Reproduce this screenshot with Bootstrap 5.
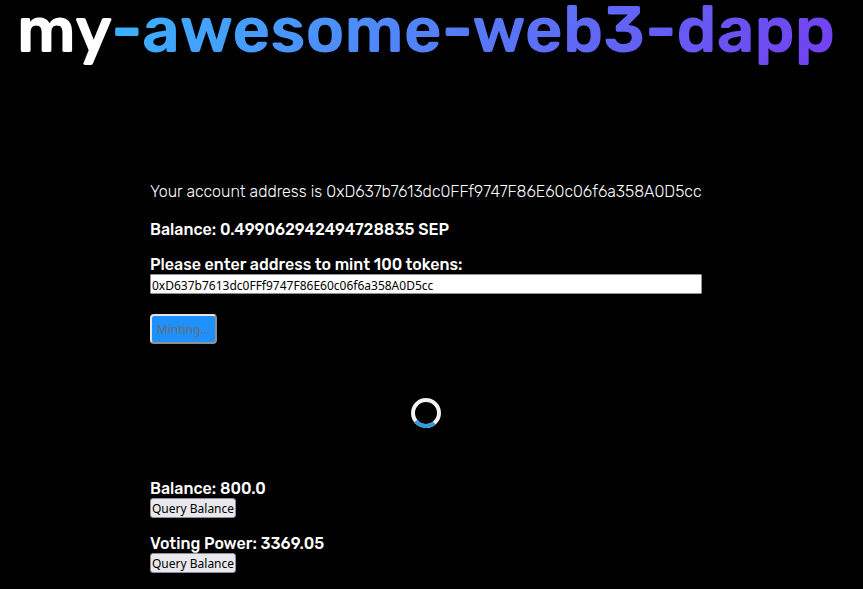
<!DOCTYPE html>
<html lang="en">
<head>
<meta charset="utf-8">
<meta name="viewport" content="width=device-width, initial-scale=1">
<title>my-awesome-web3-dapp</title>
<link href="https://cdn.jsdelivr.net/npm/bootstrap@5.3.0/dist/css/bootstrap.min.css" rel="stylesheet">
<style>
body { background: #000; color: #fff; font-family: Rubik, Inter, sans-serif; font-size: 16px; line-height: 19px; padding-right: 11px; }
.site-title { font-size: 65px; line-height: 60px; font-weight: 600; }
.title-gradient { padding-bottom: 4px; background: linear-gradient(128deg, #38b6ff, #743ef0); -webkit-background-clip: text; background-clip: text; color: transparent; }
.dapp-panel { width: 100%; max-width: 552px; margin-top: 122px; }
.account-line { font-weight: 300; margin-bottom: 19px; }
.strong-line { font-weight: 500; }
.balance-line { margin-bottom: 16px; }
.address-input, .mint-btn, .query-btn { font-family: "Noto Sans", sans-serif; font-size: 12px; line-height: 16px; }
.address-input { border: 1px solid #8f8f9d; border-radius: 1px; padding: 2px 1px 0; height: 20px; color: #000; background: #fff; }
.mint-btn { margin-top: 20px; padding: 6px 5px 4px; height: 30px; border: 2px outset #e3e3e3; border-radius: 4px; background: #1e90ff; color: #6d6d6d; }
.query-btn { height: 20px; padding: 2px 1px 0; border: 1px solid #8f8f9d; border-radius: 3px; background: #e9e9ed; color: #000; }
.mint-spinner { display: block; width: 30px; height: 30px; margin: 54px auto 51px; }
</style>
</head>
<body>
<header class="text-center">
<h1 class="site-title text-nowrap mb-0">my<span class="title-gradient">-awesome-web3-dapp</span></h1>
</header>
<main class="dapp-panel mx-auto">
<p class="account-line">Your account address is <span>0xD637b7613dc0FFf9747F86E60c06f6a358A0D5cc</span></p>
<p class="strong-line balance-line">Balance: 0.499062942494728835 SEP</p>
<form>
<label class="strong-line d-block" for="mint-address">Please enter address to mint 100 tokens:</label>
<input class="address-input d-block w-100" id="mint-address" type="text" value="0xD637b7613dc0FFf9747F86E60c06f6a358A0D5cc">
<button class="mint-btn d-block" type="button" disabled>Minting...</button>
</form>
<svg class="mint-spinner" viewBox="0 0 30 30" role="img" aria-label="Minting in progress"><circle cx="15" cy="15" r="13" fill="none" stroke="#f3f3f3" stroke-width="4"/><path d="M4.700 23A13 13 0 0 0 23.200 25" fill="none" stroke="#3498db" stroke-width="4"/></svg>
<section class="mb-3">
<div class="strong-line">Balance: 800.0</div>
<button class="query-btn d-block" type="button">Query Balance</button>
</section>
<section class="mb-3">
<div class="strong-line">Voting Power: 3369.05</div>
<button class="query-btn d-block" type="button">Query Balance</button>
</section>
</main>
<script src="https://cdn.jsdelivr.net/npm/bootstrap@5.3.0/dist/js/bootstrap.bundle.min.js"></script>
</body>
</html>
